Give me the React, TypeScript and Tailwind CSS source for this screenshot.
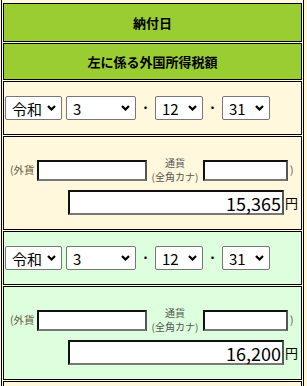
import React from "react";

const font = { fontFamily: '"Noto Sans CJK JP", "Noto Sans", sans-serif' };

function Chevron() {
  return (
    <svg width="9" height="6" viewBox="0 0 9 6" className="absolute right-[5px] top-1/2 -translate-y-1/2 pointer-events-none">
      <path d="M1 1 L4.5 4.5 L8 1" fill="none" stroke="#000" strokeWidth="2.2" />
    </svg>
  );
}

function Sel({ value, w }: { value: string; w: string }) {
  return (
    <div className={`relative h-[24px] ${w} shrink-0 rounded-[2px] border border-[#767676] bg-white`}>
      <div className="absolute left-[6px] top-1/2 -translate-y-1/2 text-[15px] leading-none text-black">{value}</div>
      <Chevron />
    </div>
  );
}

function DateRow({ bg }: { bg: string }) {
  return (
    <div className={`flex h-[54px] items-center border border-black ${bg} pl-[1px]`}>
      <Sel value="令和" w="w-[57px]" />
      <div className="ml-[4px]">
        <Sel value="3" w="w-[70px]" />
      </div>
      <div className="flex w-[19px] justify-center text-[12px] text-black">・</div>
      <Sel value="12" w="w-[48px]" />
      <div className="flex w-[19px] justify-center text-[12px] text-black">・</div>
      <Sel value="31" w="w-[48px]" />
    </div>
  );
}

function Inset({ w, h, children }: { w: string; h: string; children?: React.ReactNode }) {
  return (
    <div
      className={`${w} ${h} shrink-0 border-2 border-t-[#111] border-l-[#111] border-b-[#777] border-r-[#555] bg-white flex items-center justify-end pr-[1px]`}
    >
      {children}
    </div>
  );
}

function AmountRow({ bg, amount }: { bg: string; amount: string }) {
  return (
    <div className={`flex h-[94px] flex-col border border-black ${bg} pt-[19px]`}>
      <div className="flex items-center">
        <div className="ml-[6px] w-[27px] text-[10.5px] leading-none text-[#6a5a40]">(外貨</div>
        <Inset w="w-[110px]" h="h-[21px]" />
        <div className="flex w-[56px] flex-col items-center text-[10px] leading-[14px] text-[#555]">
          <span>通貨</span>
          <span>(全角カナ)</span>
        </div>
        <Inset w="w-[85px]" h="h-[21px]" />
        <div className="ml-[2px] text-[10.5px] leading-none text-[#555]">)</div>
      </div>
      <div className="mt-[6px] flex items-center">
        <div className="ml-[64px]">
          <Inset w="w-[216px]" h="h-[25px]">
            <span className="text-[18px] leading-none text-black">{amount}</span>
          </Inset>
        </div>
        <span className="ml-[1px] text-[13px] leading-none text-black">円</span>
      </div>
    </div>
  );
}

export default function App() {
  return (
    <div className="h-[386px] w-[307px] overflow-hidden bg-[#fff8dc]" style={font}>
      <div className="ml-[1px] flex w-[303px] flex-col gap-[1px] border-x border-black px-[1px] pt-[3px]">
        <div className="flex h-[39px] items-center justify-center border border-black bg-[#9acd32] text-[13px] font-bold text-black">
          納付日
        </div>
        <div className="flex h-[37px] items-center justify-center border border-black bg-[#9acd32] text-[13px] font-bold text-black">
          左に係る外国所得税額
        </div>
        <DateRow bg="bg-[#fff8dc]" />
        <AmountRow bg="bg-[#fff8dc]" amount="15,365" />
        <DateRow bg="bg-[#ddffdd]" />
        <AmountRow bg="bg-[#ddffdd]" amount="16,200" />
        <div className="h-[20px] border border-black bg-[#fff8dc]" />
      </div>
    </div>
  );
}
